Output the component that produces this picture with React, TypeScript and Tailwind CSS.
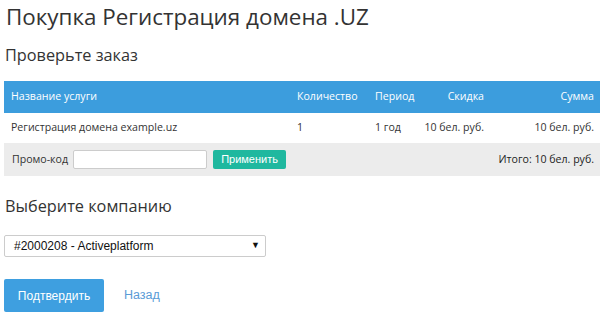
import React from "react";

export default function App() {
  const os = { fontFamily: '"Open Sans", sans-serif' };
  return (
    <div className="w-[604px] h-[321px] bg-white text-[#333] px-[4px]" style={os}>
      <h1 className="text-[22.4px] leading-[30px] pt-[2px] pl-[2px] font-normal">Покупка Регистрация домена .UZ</h1>
      <h2 className="text-[16.3px] leading-[22px] mt-[12px] pl-[1px]">Проверьте заказ</h2>
      <div className="mt-[15px] text-[10.6px]">
        <div className="grid grid-cols-[286px_78px_50px_73px_109px] h-[32px] items-center bg-[#3c9ddd] text-white">
          <div className="pl-[7px]">Название услуги</div>
          <div className="pl-[7px]">Количество</div>
          <div className="pl-[7px]">Период</div>
          <div className="pr-[7px] text-right">Скидка</div>
          <div className="pr-[6px] text-right">Сумма</div>
        </div>
        <div className="grid grid-cols-[286px_78px_50px_73px_109px] h-[30px] items-center bg-white">
          <div className="pl-[7px]">Регистрация домена example.uz</div>
          <div className="pl-[7px]">1</div>
          <div className="pl-[7px]">1 год</div>
          <div className="pr-[7px] text-right">10 бел. руб.</div>
          <div className="pr-[6px] text-right">10 бел. руб.</div>
        </div>
        <div className="flex h-[33px] items-center bg-[#ececec] pl-[8px] pr-[6px]">
          <span>Промо-код</span>
          <input className="ml-[5px] w-[134px] h-[19px] bg-white border border-[#ccc] rounded-[2px] outline-none" />
          <button
            className="ml-[6px] w-[73px] h-[19px] bg-[#1fb89f] text-white rounded-[2px] text-[11px] leading-[19px]"
            style={{ fontFamily: '"Liberation Sans", Arial, sans-serif' }}
          >
            Применить
          </button>
          <span className="ml-auto text-[#222]">Итого: 10 бел. руб.</span>
        </div>
      </div>
      <h2 className="text-[16.3px] leading-[22px] mt-[19px] pl-[1px]">Выберите компанию</h2>
      <div
        className="mt-[18px] w-[262px] h-[22px] border border-[#ccc] rounded-[2px] flex items-center pl-[9px] pr-[5px] text-[12px] text-[#111]"
        style={{ fontFamily: '"Liberation Sans", Arial, sans-serif' }}
      >
        <span>#2000208 - Activeplatform</span>
        <span className="ml-auto text-[9px]">▼</span>
      </div>
      <div className="mt-[22px] flex items-center" style={{ fontFamily: '"Liberation Sans", Arial, sans-serif' }}>
        <button className="w-[100px] h-[33px] bg-[#3e9fe0] text-white text-[12px] rounded-[2px]">Подтвердить</button>
        <a className="ml-[20px] text-[12.5px] text-[#5a9bd6]">Назад</a>
      </div>
    </div>
  );
}
